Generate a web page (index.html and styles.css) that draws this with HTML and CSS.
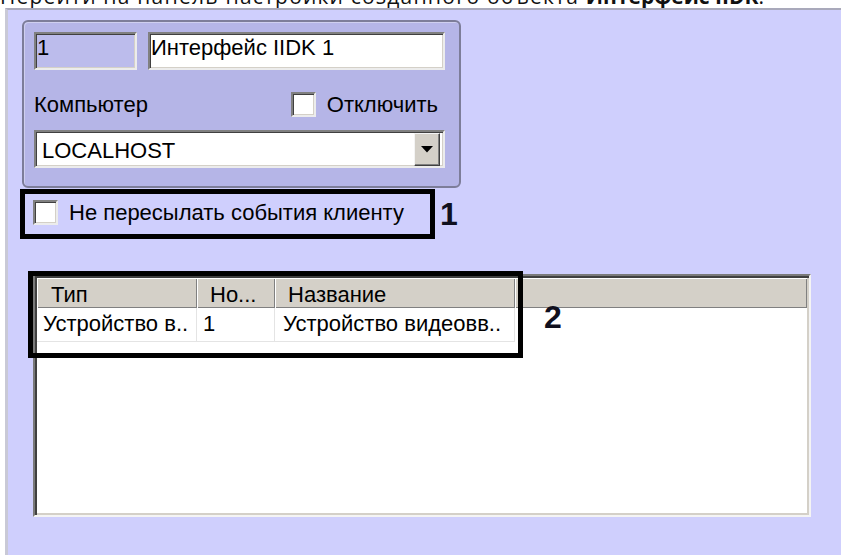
FILE: index.html
```html
<!DOCTYPE html>
<html lang="ru">
<head>
<meta charset="utf-8">
<title>Интерфейс IIDK</title>
<link rel="stylesheet" href="styles.css">
</head>
<body>
  <div class="caption">
    <p>Перейти на панель настройки созданного объекта <b>Интерфейс IIDK</b>.</p>
  </div>

  <div class="panel">
    <div class="groupbox">
      <div class="fields">
        <div class="field field-id">1</div>
        <div class="field field-name">Интерфейс IIDK 1</div>
      </div>
      <div class="labels">
        <span class="label">Компьютер</span>
        <label class="check check-off"><span class="box"></span><span>Отключить</span></label>
      </div>
      <div class="combo">
        <span class="combo-text">LOCALHOST</span>
        <span class="combo-btn">
          <svg width="12" height="7" viewBox="0 0 12 7"><polygon points="0,0 12,0 6,6.5" fill="#000"/></svg>
        </span>
      </div>
    </div>

    <div class="callout-row">
      <div class="callout callout-1">
        <label class="check"><span class="box"></span><span>Не пересылать события клиенту</span></label>
      </div>
      <span class="marker marker-1">1</span>
    </div>

    <div class="listview">
      <div class="lv-header">
        <div class="hcell col-type">Тип</div>
        <div class="hcell col-num">Но...</div>
        <div class="hcell col-name">Название</div>
        <div class="hcell col-rest"></div>
      </div>
      <div class="lv-row">
        <div class="cell col-type">Устройство в..</div>
        <div class="cell col-num">1</div>
        <div class="cell col-name">Устройство видеовв..</div>
      </div>
    </div>

    <div class="callout callout-2"></div>
    <span class="marker marker-2">2</span>
  </div>
</body>
</html>
```

FILE: styles.css
```css
* { box-sizing: border-box; }

html, body { margin: 0; }

body {
  width: 841px;
  height: 555px;
  overflow: hidden;
  background: #fff;
  color: #000;
  font-family: "Liberation Sans", Arial, sans-serif;
  font-size: 22px;
}

/* document caption above the dialog, mostly scrolled out of view */
.caption {
  height: 8px;
  overflow: hidden;
}

.caption p {
  margin: -18px 0 0 0;
  font-family: "Open Sans", sans-serif;
  font-size: 21px;
  line-height: 28px;
  letter-spacing: 1.2px;
  white-space: nowrap;
  color: #111;
}

.caption b {
  letter-spacing: 0;
}

/* settings panel */
.panel {
  position: relative;
  margin-left: 5px;
  height: 547px;
  padding-top: 10px;
  background: #cfcffd;
  border-left: 3px solid #c9c9d6;
  border-top: 2px solid #a9a9bb;
}

.groupbox {
  margin-left: 14px;
  width: 439px;
  height: 168px;
  padding: 10px 14px 0 10px;
  background: #b5b5e7;
  border: 2px solid #7d7d99;
  border-radius: 6px;
  box-shadow: inset 1px 1px rgba(255, 255, 255, 0.35);
}

.fields {
  display: flex;
  gap: 11px;
}

/* sunken 3D edges of edit boxes and check boxes */
.field,
.combo,
.box {
  border: 2px solid;
  border-color: #808080 #ececec #ececec #808080;
  box-shadow: inset 1px 1px #404040, inset -1px -1px #d4d0c8;
}

.field {
  height: 38px;
  padding: 1px 3px 0 1px;
  line-height: 25px;
  white-space: nowrap;
  overflow: hidden;
}

.field-id {
  width: 103px;
  background: #bcbcec;
}

.field-name {
  width: 297px;
  background: #fff;
}

.labels {
  margin-top: 22px;
  height: 25px;
  display: flex;
  align-items: center;
  justify-content: space-between;
  line-height: 25px;
}

.check {
  display: flex;
  align-items: center;
  gap: 11px;
  line-height: 25px;
  white-space: nowrap;
}

.check-off {
  margin-right: 7px;
}

.box {
  width: 25px;
  height: 25px;
  background: #fff;
  flex: none;
}

.combo {
  margin-top: 13px;
  height: 38px;
  display: flex;
  align-items: flex-start;
  justify-content: space-between;
  padding: 0 3px 0 6px;
  background: #fff;
}

.combo-text {
  padding-top: 6px;
  line-height: 25px;
}

.combo-btn {
  margin-top: 1px;
  width: 26px;
  height: 33px;
  display: flex;
  align-items: center;
  justify-content: center;
  background: #d4d0c8;
  border: 1px solid;
  border-color: #f4f4f4 #404040 #404040 #f4f4f4;
  box-shadow: inset -1px -1px #808080;
}

/* black annotation frames */
.callout {
  border: 5px solid #000;
}

.callout-row {
  display: flex;
  align-items: flex-start;
  margin-top: 1px;
  margin-left: 12px;
}

.callout-1 {
  width: 415px;
  height: 50px;
  padding: 6px 0 0 8px;
}

.marker {
  font-weight: 700;
  font-size: 32px;
  line-height: 32px;
  color: #10101e;
}

.marker-1 {
  margin: 9px 0 0 5px;
}

.callout-2 {
  position: absolute;
  left: 20px;
  top: 261px;
  width: 495px;
  height: 87px;
}

.marker-2 {
  position: absolute;
  left: 536px;
  top: 291px;
}

/* list view */
.listview {
  margin-top: 35px;
  margin-left: 25px;
  width: 778px;
  height: 243px;
  background: #fff;
  border: 2px solid;
  border-color: #7a7a7a #f4f4f4 #f4f4f4 #7a7a7a;
  box-shadow: inset 2px 2px #404040, inset -2px -2px #d4d0c8;
  padding: 2px 2px 0 2px;
}

.lv-header {
  display: flex;
  height: 30px;
}

.hcell {
  height: 30px;
  padding: 4px 0 0 13px;
  line-height: 25px;
  white-space: nowrap;
  background: #d4d0c8;
  box-shadow: inset 1px 1px #fff, inset -1px -1px #808080;
}

.col-type { width: 160px; flex: none; }
.col-num { width: 78px; flex: none; }
.col-name { width: 240px; flex: none; }
.col-rest { flex: 1; }

.hcell.col-type { padding-left: 14px; }

.lv-row {
  display: flex;
  height: 34px;
}

.cell {
  padding: 3px 0 0 6px;
  line-height: 25px;
  white-space: nowrap;
  overflow: hidden;
  border-right: 1px solid #e4e4e4;
  border-bottom: 1px solid #e4e4e4;
}

.cell.col-name { padding-left: 8px; }
```
